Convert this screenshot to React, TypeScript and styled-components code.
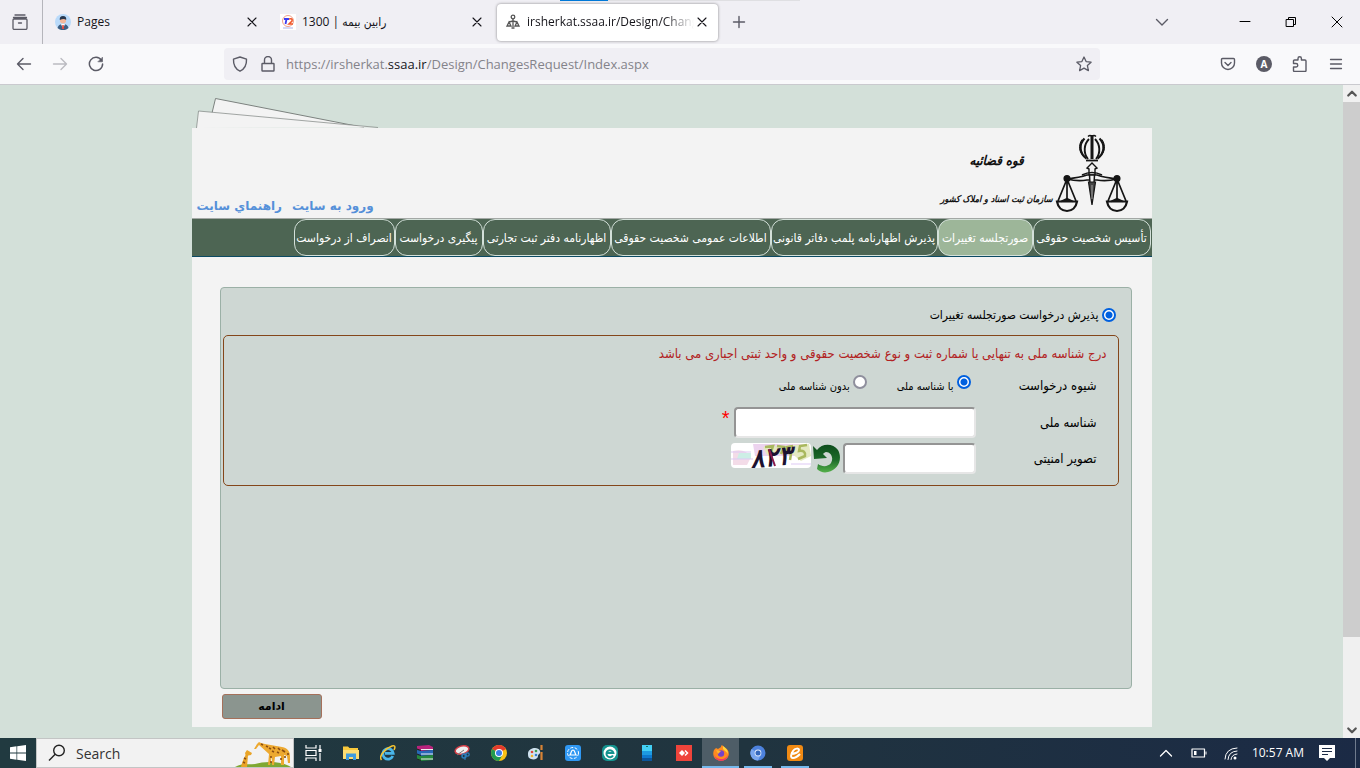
import React from "react";
import styled, { createGlobalStyle, css } from "styled-components";

const ui = `"Open Sans", "DejaVu Sans Condensed", "DejaVu Sans", sans-serif`;
const fa = `"DejaVu Sans Condensed", "DejaVu Sans", sans-serif`;

const GlobalStyle = createGlobalStyle`
  * { box-sizing: border-box; }
  body { margin: 0; font-family: ${ui}; font-size: 12px; color: #15141a; }
  button, input { font-family: inherit; }
`;

const Screen = styled.div`
  display: flex;
  flex-direction: column;
  min-height: 100vh;
`;

/* ---------- browser chrome ---------- */
const TabBar = styled.header`
  position: relative;
  display: flex;
  align-items: center;
  height: 44px;
  background: #f0eff4;
`;
const LoadingMark = styled.span`
  position: absolute;
  top: 0;
  left: 560px;
  width: 240px;
  height: 1px;
  background: linear-gradient(to right, #0078d7 20%, #dfdfe2 20%);
`;
const IconButton = styled.button<{ $w?: number }>`
  display: grid;
  place-items: center;
  flex: none;
  width: ${(p) => p.$w ?? 36}px;
  height: 32px;
  padding: 0;
  border: 0;
  background: none;
  color: #5b5b66;
`;
const RecentBox = styled.div`
  display: flex;
  align-items: center;
  height: 100%;
  width: 43px;
  padding-left: 2px;
  border-right: 1px solid #b5b5bb;
`;
const Tab = styled.div<{ $active?: boolean }>`
  display: flex;
  align-items: center;
  gap: 6px;
  width: 225px;
  height: 44px;
  padding: 0 8px 0 12px;
  ${(p) =>
    p.$active &&
    css`
      width: 221px;
      height: 37px;
      margin: 0 0 0 4px;
      padding: 0 8px 0 8px;
      border-radius: 4px;
      background: #fff;
      box-shadow: 0 0 3px rgba(0, 0, 0, 0.45);
    `}
`;
const TabTitle = styled.span<{ $fade?: boolean }>`
  flex: 1;
  min-width: 0;
  overflow: hidden;
  white-space: nowrap;
  line-height: 20px;
  ${(p) =>
    p.$fade &&
    css`
      margin-right: -6px;
      mask-image: linear-gradient(to right, #000 82%, transparent);
    `}
`;
const TabClose = styled(IconButton)`
  width: 16px;
  height: 20px;
  color: #15141a;
`;
const Spacer = styled.div`
  flex: 1;
`;
const TabListButton = styled(IconButton)`
  margin-right: 42px;
`;
const ToolBar = styled.div`
  display: flex;
  align-items: center;
  height: 41px;
  padding: 0 6px;
  background: #f9f9fb;
  border-bottom: 1px solid #cacacf;
`;
const UrlBox = styled.div`
  display: flex;
  align-items: center;
  flex: 1;
  min-width: 0;
  height: 32px;
  margin: 0 110px;
  padding-left: 2px;
  border-radius: 4px;
  background: #f0eff4;
`;
const UrlText = styled.span`
  flex: 1;
  min-width: 0;
  overflow: hidden;
  white-space: nowrap;
  padding-left: 4px;
  font-size: 13px;
  line-height: 20px;
  color: #84838a;
  b { font-weight: 400; color: #15141a; }
`;

/* ---------- page ---------- */
const Viewport = styled.div`
  display: flex;
  flex: 1;
  background: #d3e0d9;
`;
const Scrollable = styled.div`
  flex: 1;
  min-width: 0;
  padding-top: 12px;
`;
const Page = styled.div`
  max-width: 960px;
  margin: 0 auto;
`;
const Sheets = styled.svg`
  display: block;
`;
const Body = styled.div`
  background: #f3f3f3;
  padding-bottom: 8px;
`;
const Masthead = styled.div`
  display: flex;
  justify-content: space-between;
  height: 90px;
`;
const Brand = styled.div`
  display: flex;
  align-items: flex-end;
  gap: 2px;
  padding: 0 21px 3px 0;
`;
const BrandText = styled.div`
  display: flex;
  flex-direction: column;
  align-items: center;
  gap: 18px;
  padding-bottom: 6px;
  font-family: ${fa};
  font-weight: 700;
  font-style: italic;
  color: #111;
  white-space: nowrap;
`;
const BrandTop = styled.span`
  font-size: 13px;
  line-height: 20px;
`;
const BrandSub = styled.span`
  font-size: 9px;
  line-height: 20px;
`;
const TopLinks = styled.nav`
  display: flex;
  align-items: flex-end;
  gap: 10px;
  padding: 0 0 3px 5px;
  font-family: "DejaVu Sans", sans-serif;
  font-size: 12px;
  font-weight: 700;
  line-height: 18px;
  a { color: #5590d9; text-decoration: none; }
`;
const Menu = styled.nav`
  display: flex;
  height: 39px;
  padding-right: 1px;
  border-top: 1px solid #a3a8a5;
  border-bottom: 1px solid #0b4a63;
  background: #4d6553;
`;
const MenuItem = styled.a<{ $w: number; $active?: boolean }>`
  display: grid;
  place-items: center;
  width: ${(p) => p.$w}px;
  height: 37px;
  border: 1px solid #d3e0d9;
  border-radius: 12px;
  background: ${(p) => (p.$active ? "#9db699" : "transparent")};
  color: #fff;
  font-family: ${fa};
  font-size: 12px;
  text-decoration: none;
  white-space: nowrap;
`;
const Panel = styled.form`
  min-height: 402px;
  margin: 30px 20px 5px 28px;
  padding: 15px 12px 0 2px;
  border: 1px solid #9bb0a6;
  border-radius: 4px;
  background: #ced7d3;
  font-family: ${fa};
  font-size: 13px;
  color: #000;
`;
const Choice = styled.label<{ $small?: boolean }>`
  display: inline-flex;
  align-items: ${(p) => (p.$small ? "flex-start" : "center")};
  gap: 3px;
  font-size: ${(p) => (p.$small ? 11 : 12)}px;
  line-height: 24px;
  white-space: nowrap;
`;
const Radio = styled.input`
  appearance: none;
  flex: none;
  width: 14px;
  height: 14px;
  margin: 0;
  border: 2px solid #8f8f9d;
  border-radius: 50%;
  background: #fff;
  &:checked {
    border-color: #0060df;
    background: radial-gradient(circle, #0060df 3px, #fff 4px);
  }
`;
const MainChoice = styled.div`
  padding-right: 3px;
  height: 32px;
`;
const Box = styled.fieldset`
  margin: 0;
  min-width: 0;
  height: 151px;
  padding: 6px 11px 0;
  border: 1px solid #84461a;
  border-radius: 5px;
`;
const Hint = styled.p`
  margin: 0;
  line-height: 24px;
  color: #b22222;
  font-size: 13px;
`;
const Row = styled.div<{ $h: number }>`
  display: flex;
  align-items: center;
  height: ${(p) => p.$h}px;
  padding-right: 10px;
`;
const RowLabel = styled.label`
  flex: none;
  width: 121px;
`;
const Choices = styled.div`
  display: flex;
  gap: 30px;
  padding: 4px 5px 0 0;
`;
const Field = styled.input<{ $w: number }>`
  width: ${(p) => p.$w}px;
  height: 31px;
  padding: 2px 4px;
  border: 2px solid;
  border-color: #949494 #e6e6e6 #e6e6e6 #949494;
  border-radius: 4px;
  background: #fff;
`;
const Star = styled.span`
  margin: 0 4px 8px 0;
  color: #f00;
  font-family: "Liberation Sans", sans-serif;
  font-size: 20px;
  line-height: 24px;
`;
const Refresh = styled.button`
  margin: 0 2px;
  padding: 0;
  border: 0;
  background: none;
  width: 28px;
  height: 30px;
`;
const Captcha = styled.svg`
  margin-bottom: 6px;
  border-radius: 4px;
`;
const Submit = styled.button`
  display: block;
  width: 100px;
  height: 25px;
  margin-left: 30px;
  border: 1px solid #a5705a;
  border-radius: 3px;
  background: #8b958f;
  color: #000;
  font-family: "DejaVu Sans", sans-serif;
  font-size: 11px;
  font-weight: 700;
`;
const ScrollBar = styled.div`
  display: flex;
  flex-direction: column;
  width: 17px;
  background: #f0f0f0;
  color: #555;
`;
const ScrollEnd = styled.button`
  display: grid;
  place-items: center;
  height: 17px;
  padding: 0;
  border: 0;
  background: none;
  color: inherit;
`;
const Track = styled.div`
  flex: 1;
`;
const Thumb = styled.div`
  height: 86.5%;
  background: #cdcdcd;
`;

/* ---------- task bar ---------- */
const TaskBar = styled.footer`
  display: flex;
  height: 30px;
  background: linear-gradient(to right, #213a40, #20343f 55%, #1b2a45);
  color: #fff;
`;
const TaskButton = styled.button<{ $w?: number; $state?: "active" | "open" }>`
  position: relative;
  display: grid;
  place-items: center;
  flex: none;
  width: ${(p) => p.$w ?? 37}px;
  height: 30px;
  padding: 0;
  border: 0;
  color: #fff;
  background: ${(p) => (p.$state === "active" ? "#4e5d67" : "none")};
  ${(p) =>
    p.$state &&
    css`
      &::after {
        content: "";
        position: absolute;
        left: ${p.$state === "active" ? 0 : 5}px;
        right: ${p.$state === "active" ? 0 : 4}px;
        bottom: 0;
        height: 2px;
        background: #76b9ed;
      }
    `}
`;
const SearchBox = styled.label`
  display: flex;
  align-items: center;
  width: 258px;
  height: 30px;
  padding-left: 11px;
  border: 1px solid #c3c5c5;
  background: #f2f2f2;
  overflow: hidden;
`;
const SearchInput = styled.input`
  flex: 1;
  min-width: 0;
  margin-left: 10px;
  padding: 0;
  border: 0;
  outline: 0;
  background: none;
  font-size: 14px;
  &::placeholder { color: #333; opacity: 1; }
`;
const Clock = styled.time`
  padding: 0 4px 0 5px;
  line-height: 30px;
  font-size: 12px;
  white-space: nowrap;
`;
const DesktopEdge = styled.span`
  width: 5px;
  margin-left: 9px;
  border-left: 1px solid #6f7b8d;
`;

type IcoProps = { s?: number; w?: number; children: React.ReactNode };
const Ico = ({ s = 16, w = 1.4, children }: IcoProps) => (
  <svg width={s} height={s} viewBox="0 0 16 16" fill="none" stroke="currentColor" strokeWidth={w} strokeLinecap="round" strokeLinejoin="round">
    {children}
  </svg>
);
const Cross = () => (
  <Ico s={16} w={1.1}><path d="M4 4l8 8M12 4l-8 8" /></Ico>
);

const Emblem = () => (
  <svg width="76" height="82" viewBox="0 0 76 82" fill="none" stroke="#151515" strokeWidth="1.5">
    <path d="M37 2v24" strokeWidth="3" />
    <path d="M33 3.500q2-2 4 0q2-2 4 0" strokeWidth="1.400" />
    <path d="M34 6c-5 5-6 14-1 20M40 6c5 5 6 14 1 20" strokeWidth="1.900" />
    <path d="M29.500 5.500c-6 6-5 15 2 20M44.500 5.500c6 6 5 15-2 20" strokeWidth="2.200" />
    <path d="M27 6.500c-4 6-3 13 2 17M47 6.500c4 6 3 13-2 17" strokeWidth="1" />
    <path d="M31 27.500h12" strokeWidth="1.800" />
    <path d="M34 42v-6l-2-1 5-5 5 5-2 1v6" fill="#f3f3f3" strokeWidth="1.400" />
    <path d="M12 46c8-1 14-2 20-4h10c6 2 12 3 20 4-8 2-14 2-20 1h-10c-6 1-12 1-20-1z" fill="#f3f3f3" strokeWidth="1.700" />
    <path d="M27 42q10-5 20 0" strokeWidth="1.500" />
    <path d="M34.500 42h5l-.5 9h-4z" fill="#f3f3f3" />
    <path d="M33.500 49h7l-3.500 23z" fill="#444" strokeWidth="1.200" />
    <path d="M37 52v14" stroke="#bbb" strokeWidth=".8" />
    <circle cx="12" cy="45.500" r="2.800" fill="#151515" />
    <circle cx="62" cy="45.500" r="2.800" fill="#151515" />
    {[12, 62].map((x) => (
      <g key={x}>
        <path d={`M${x} 46L${x - 9} 68M${x} 46L${x + 9} 68M${x} 46v20`} strokeWidth="1.700" />
        <path d={`M${x - 10} 68.500h20c-1 6-5 9.500-10 9.500s-9-3.500-10-9.500z`} strokeWidth="2.200" />
        <path d={`M${x - 6} 68.500l6-3 6 3`} fill="#151515" />
      </g>
    ))}
  </svg>
);

const Giraffes = () => (
  <svg width="58" height="28" viewBox="0 0 58 28" fill="none">
    <path d="M0 28c6-4 14-2 20-3 10-3 26-3 36 3z" fill="#7fa832" />
    <path d="M6 28c1-5 3-9 5-13l2 1-1 12z" fill="#e9a428" />
    <path d="M10 14l2-3 5 3-1 2-5 1z" fill="#e9a428" />
    <path d="M19 10l3-5 2-2 2 1 4 1 17 3c6 1 8 5 8 9v7h-2l-1-7-3-1v10h-3v-9l-6 1-1 8h-2v-9l-2 9h-2l1-11-10-9-3 4z" fill="#eda930" />
    <path d="M26 5l2 1M31 7l2 1M34 9l2 1M38 8l2 2M43 9l2 2M47 11l3 2M37 12l2 1M42 13l2 1M36 17v2M50 17v2M53 14v2M9 19l2 1M8 23l2 1M36 22v2M46 19v2" stroke="#8a4d12" strokeWidth="1.600" />
  </svg>
);

const appIcons: { name: string; state?: "active" | "open"; art: React.ReactNode }[] = [
  { name: "File Explorer", art: <><path d="M0 1.500h5l1.500 1.500H15v11H0z" fill="#f9c93c" /><path d="M0 5h16v9H0z" fill="#fddc73" /><path d="M3 8.500h10V15h-3v-3H6v3H3z" fill="#3f9be0" /></> },
  { name: "Internet Explorer", art: <><path d="M12.800 11A5.200 5.200 0 1 1 13.200 8.300H5" stroke="#49b6ea" strokeWidth="2.800" /><path d="M1.500 15C-2 11 6 3 12 1c4-1 3 2 2 4" stroke="#f4c431" strokeWidth="1.500" /></> },
  { name: "WinRAR", art: <><path d="M0 1l12-1 4 2v3L4 6 0 4z" fill="#b8237c" /><path d="M0 5l4 1 12-1v5L4 11 0 9z" fill="#2767b8" /><path d="M0 10l4 1 12-1v5L4 16l-4-2z" fill="#25883d" /><path d="M4 4.500h12M4 9h12M4 14h12" stroke="#eee" /><path d="M0 4l4 1.500M0 9l4 1.500M0 14l4 1.500" stroke="#222" /></> },
  { name: "Snipping Tool", art: <><ellipse cx="8" cy="5" rx="7" ry="4" transform="rotate(-15 8 5)" fill="#eee" stroke="#d33d46" strokeWidth="1.500" /><path d="M3 10l7-5" stroke="#777" /><circle cx="10" cy="11" r="2" stroke="#2c7ebc" strokeWidth="1.500" /><circle cx="13.500" cy="9.500" r="1.700" stroke="#2c7ebc" strokeWidth="1.300" /><path d="M11 9v6" stroke="#2c7ebc" /></> },
  { name: "Chrome", art: <><circle cx="8" cy="8" r="8" fill="#fbc116" /><path d="M8 8L1.100 4A8 8 0 0 1 15 4z" fill="#e33b2e" /><path d="M8 8L1.100 4A8 8 0 0 0 8 16l3.500-6z" fill="#229a50" /><circle cx="8" cy="8" r="4" fill="#fff" /><circle cx="8" cy="8" r="3" fill="#3a7de8" /></> },
  { name: "Paint", art: <><path d="M0 8C1 3 10 1 12 6c1 3-2 3-2 5 0 3-4 4-7 3-3-1-3-3-3-6z" fill="#cfe2ef" /><circle cx="4" cy="7" r="1.300" fill="#e04a3a" /><circle cx="8" cy="6" r="1.300" fill="#3f9e4d" /><circle cx="4" cy="11" r="1.300" fill="#f0b52d" /><circle cx="8" cy="10" r="1.300" fill="#377fd0" /><path d="M13.500 0v5M13.500 7v8" stroke="#d88335" strokeWidth="2.200" /></> },
  { name: "SHAREit", art: <><rect width="16" height="16" rx="3" fill="#2f98f3" /><circle cx="8" cy="8" r="5.500" stroke="#fff" strokeDasharray="3 1.500" /><path d="M5 10c1-1 1-5 3-5s2 4 3 5z" stroke="#fff" strokeWidth="1.200" /></> },
  { name: "eScan", art: <><rect width="16" height="16" rx="5" fill="#14938f" /><circle cx="8" cy="8" r="6.500" fill="#fff" /><path d="M11 10.500A3.500 3.500 0 1 1 11.400 8H5.500" stroke="#14938f" strokeWidth="2" /></> },
  { name: "Your Phone", art: <><path d="M3 0h10v7H3z" fill="#43d0f5" /><path d="M3 6h10v4H3z" fill="#1d9be2" /><path d="M3 10h10v3H3z" fill="#0e79cf" /><path d="M3 13h10v3H3z" fill="#0b559b" /><path d="M7 1.500h2" stroke="#176" /></> },
  { name: "AnyDesk", art: <><path d="M0 0h16v16H0z" fill="#ef443b" /><path d="M6 5l3 3-3 3-3-3z" fill="#fff" /><path d="M9 5.500L11.500 8 9 10.500" stroke="#fff" strokeWidth="1.500" /></> },
  { name: "Firefox", state: "active", art: <><path d="M1 5l2-2 2 1 3-2c0-1 0-1 1-2l3 3c3 1 5 5 3 9-3 5-11 5-14 0-1-2-1-5 0-7z" fill="#ff8a1f" /><path d="M1 9c1 5 10 8 14 1-1 8-13 8-14-1z" fill="#f13a65" /><path d="M10 1c3 2 5 4 5 8-2-3-3-3-5-5z" fill="#ffd33a" /><circle cx="8" cy="8.500" r="3.200" fill="#7542c9" /><path d="M3 5l5 1-3 3z" fill="#ffb52e" /></> },
  { name: "Chromium", state: "open", art: <><circle cx="8" cy="8" r="7.500" fill="#4d82dd" /><path d="M8 8L1.500 4A7.500 7.500 0 0 0 8 15.500l3-6z" fill="#78a5ef" /><circle cx="8" cy="8" r="3.400" fill="#dce8fb" /><circle cx="8" cy="8" r="2.500" fill="#3467bd" /></> },
  { name: "eToken", state: "open", art: <><rect width="16" height="16" rx="3" fill="#f08a13" /><path d="M4 9c4 0 8-2 8-4s-4-2-6 1-3 7 0 7 5-2 7-4" stroke="#fff" strokeWidth="2" /></> },
];

const menu = [
  { t: "تأسیس شخصیت حقوقی", w: 118 },
  { t: "صورتجلسه تغییرات", w: 95, active: true },
  { t: "پذیرش اظهارنامه پلمب دفاتر قانونی", w: 167 },
  { t: "اطلاعات عمومی شخصیت حقوقی", w: 160 },
  { t: "اظهارنامه دفتر ثبت تجارتی", w: 128 },
  { t: "پیگیری درخواست", w: 88 },
  { t: "انصراف از درخواست", w: 101 },
];

export default function App() {
  return (
    <Screen>
      <GlobalStyle />
      <TabBar>
        <LoadingMark />
        <RecentBox>
          <IconButton aria-label="Recent browsing">
            <Ico s={16} w={1.3}><path d="M3 1h10M1.500 3.500h13M2 5h12q1 0 1 1v8q0 1.500-1.500 1.500h-11Q1 15.500 1 14V6q0-1 1-1M6.500 9h3" /></Ico>
          </IconButton>
        </RecentBox>
        <Tab>
          <svg width="16" height="16" viewBox="0 0 16 16">
            <circle cx="8" cy="8" r="8" fill="#b9dafa" />
            <path d="M2.500 14q1-4 5.500-4t5.500 4A8 8 0 0 1 2.500 14z" fill="#3d5f83" />
            <path d="M6 10l2 5 2-5z" fill="#fff" /><path d="M7.300 11h1.400l.5 4H7z" fill="#e0483f" />
            <circle cx="8" cy="6.500" r="3" fill="#f3b79b" /><path d="M4.800 6q-.5-4 3.200-4t3.200 4Q9 4 4.800 6z" fill="#26384f" />
          </svg>
          <TabTitle>Pages</TabTitle>
          <TabClose aria-label="Close tab"><Cross /></TabClose>
        </Tab>
        <Tab>
          <svg width="16" height="16" viewBox="0 0 16 16" fill="none">
            <path d="M0 0h16v16H0z" fill="#fff" />
            <circle cx="8" cy="7" r="5.500" stroke="#f0a08c" />
            <path d="M4 5h5M6.500 5L5.500 10" stroke="#3c3cf0" strokeWidth="1.800" /><path d="M9 5q4-1 3 2l-3 3h4" stroke="#f1572a" strokeWidth="1.600" />
            <path d="M3 14h10" stroke="#a9b3ea" />
          </svg>
          <TabTitle><bdi dir="rtl">رابین بیمه | 1300</bdi></TabTitle>
          <TabClose aria-label="Close tab"><Cross /></TabClose>
        </Tab>
        <Tab $active>
          <svg width="16" height="16" viewBox="0 0 16 16" fill="none" stroke="#555" strokeWidth="1.300">
            <circle cx="8" cy="3" r="1.800" /><path d="M8 5v8M4 8l4-1 4 1M4 8l-2 4h4zM12 8l-2 4h4zM6.500 14h3" />
          </svg>
          <TabTitle $fade>irsherkat.ssaa.ir/Design/Changes</TabTitle>
          <TabClose aria-label="Close tab"><Cross /></TabClose>
        </Tab>
        <IconButton $w={42} aria-label="New tab"><Ico><path d="M8 2.500v11M2.500 8h11" /></Ico></IconButton>
        <Spacer />
        <TabListButton aria-label="List all tabs"><Ico><path d="M2.500 5.500L8 11l5.500-5.500" /></Ico></TabListButton>
        <IconButton $w={46} aria-label="Minimize"><Ico w={1}><path d="M3 7.500h10" stroke="#000" /></Ico></IconButton>
        <IconButton $w={46} aria-label="Restore"><Ico w={1}><path d="M3.500 5.500h7v7h-7zM5.500 5.500v-2h7v7h-2" stroke="#000" /></Ico></IconButton>
        <IconButton $w={46} aria-label="Close"><Ico w={1}><path d="M3 3l10 10M13 3L3 13" stroke="#000" /></Ico></IconButton>
      </TabBar>

      <ToolBar>
        <IconButton aria-label="Back"><Ico><path d="M14.500 8H1.500M7 2.500L1.500 8 7 13.500" /></Ico></IconButton>
        <IconButton aria-label="Forward" disabled><Ico><path d="M1.500 8h13M9 2.500L14.500 8 9 13.500" stroke="#bbbbc1" /></Ico></IconButton>
        <IconButton aria-label="Reload"><Ico w={1.500}><path d="M13.500 4.300A6.600 6.600 0 1 0 14.600 8" /><path d="M14.500 1.500v4.300h-4.300z" fill="currentColor" strokeWidth=".6" /></Ico></IconButton>
        <UrlBox>
          <IconButton $w={28} aria-label="Tracking protection"><Ico><path d="M8 1l6.500 2.200c.3 6-2.500 10-6.500 12C4 13.200 1.200 9.200 1.500 3.200z" /></Ico></IconButton>
          <IconButton $w={28} aria-label="Site information"><Ico><path d="M2.500 7.500h11q.5 0 .5.500v6.500q0 .5-.5.500h-11q-.5 0-.5-.5V8q0-.5.500-.5M4.500 7.500V4a3.500 3.500 0 0 1 7 0v3.500" /></Ico></IconButton>
          <UrlText>https://irsherkat.<b>ssaa.ir</b>/Design/ChangesRequest/Index.aspx</UrlText>
          <IconButton $w={32} aria-label="Bookmark"><Ico w={1.300}><path d="M8 1l2.100 4.600 5 .6-3.700 3.400 1 5L8 12.100l-4.400 2.500 1-5L.9 6.200l5-.6z" /></Ico></IconButton>
        </UrlBox>
        <IconButton aria-label="Pocket"><Ico><path d="M2.500 2.500h11q1 0 1 1V7a6.500 6.500 0 0 1-13 0V3.500q0-1 1-1M5 6.500l3 3 3-3" /></Ico></IconButton>
        <IconButton aria-label="Account">
          <svg width="16" height="16" viewBox="0 0 16 16"><circle cx="8" cy="8" r="8" fill="#5b5b66" /><text x="8" y="12" textAnchor="middle" fontSize="10" fontWeight="700" fill="#fff" fontFamily="Noto Sans">A</text></svg>
        </IconButton>
        <IconButton aria-label="Extensions"><Ico><path d="M2.500 15.500q-1 0-1-1V11H4a1.600 1.600 0 0 0 0-3.500H1.500V5q0-1 1-1H6V2.500a1.700 1.700 0 0 1 3.400 0V4H13q1 0 1 1v9.500q0 1-1 1z" /></Ico></IconButton>
        <IconButton aria-label="Menu"><Ico w={1.300}><path d="M2.500 3.500h11M2.500 8h11M2.500 12.500h11" /></Ico></IconButton>
      </ToolBar>

      <Viewport>
        <Scrollable>
          <Page>
            <Sheets width="190" height="31" viewBox="0 0 190 31" fill="#f3f3f3" stroke="#7c827f">
              <path d="M20 16l3.500-14.500L172 30.500" />
              <path d="M4.500 31L6.500 14 186 30.500" strokeWidth=".7" />
            </Sheets>
            <Body>
              <Masthead>
                <TopLinks dir="ltr">
                  <a href="#help">راهنماي سايت</a>
                  <a href="#login">ورود به سايت</a>
                </TopLinks>
                <Brand>
                  <BrandText dir="rtl">
                    <BrandTop>قوه قضائیه</BrandTop>
                    <BrandSub>سازمان ثبت اسناد و املاک کشور</BrandSub>
                  </BrandText>
                  <Emblem />
                </Brand>
              </Masthead>
              <Menu dir="rtl">
                {menu.map((m) => (
                  <MenuItem key={m.t} href="#menu" $w={m.w} $active={m.active}>{m.t}</MenuItem>
                ))}
              </Menu>
              <Panel dir="rtl" id="request">
                <MainChoice>
                  <Choice>
                    <Radio type="radio" name="kind" defaultChecked />
                    پذیرش درخواست صورتجلسه تغییرات
                  </Choice>
                </MainChoice>
                <Box>
                  <Hint>درج شناسه ملی به تنهایی یا شماره ثبت و نوع شخصیت حقوقی و واحد ثبتی اجباری می باشد</Hint>
                  <Row $h={38} role="radiogroup" aria-labelledby="way">
                    <RowLabel as="span" id="way">شیوه درخواست</RowLabel>
                    <Choices>
                      <Choice $small><Radio type="radio" name="way" defaultChecked />با شناسه ملی</Choice>
                      <Choice $small><Radio type="radio" name="way" />بدون شناسه ملی</Choice>
                    </Choices>
                  </Row>
                  <Row $h={36}>
                    <RowLabel htmlFor="nid">شناسه ملی</RowLabel>
                    <Field id="nid" $w={242} />
                    <Star>*</Star>
                  </Row>
                  <Row $h={36}>
                    <RowLabel htmlFor="code">تصویر امنیتی</RowLabel>
                    <Field id="code" $w={133} />
                    <Refresh type="button" aria-label="Refresh">
                      <svg width="28" height="30" viewBox="0 0 28 30" fill="none">
                        <defs><linearGradient id="g" x1="0" y1="0" x2="0" y2="1"><stop offset="0" stopColor="#0d4d1c" /><stop offset=".55" stopColor="#1d6b2a" /><stop offset="1" stopColor="#54b04a" /></linearGradient></defs>
                        <path d="M0 3l4 4C9 0 20 0 25 7c5 9 0 20-10 22-4 1-8 0-11-3l1-5c4 3 10 3 13-1 3-5 0-11-5-11-1 0-2 1-3 2l4 4-13 1z" fill="url(#g)" />
                      </svg>
                    </Refresh>
                    <Captcha width="80" height="25" viewBox="0 0 80 25">
                      <path d="M0 0h80v25H0z" fill="#fff" />
                      <path d="M22 1h50l-6 12H24z" fill="#ecd3ee" /><path d="M2 8q12-3 18 6l-4 8H2z" fill="#f3dce8" /><path d="M8 10h12v6H6z" fill="#cdeee6" />
                      <path d="M32 4l46-3 2 12-10 5-10-8-24 2z" fill="#e4e9c2" />
                      <path d="M0 9h20M0 16h22M60 21h20" stroke="#ddc9f4" />
                      <path d="M34 4l8-1-2 6M46 3l7 1-3 7M62 3l-6 1-1 5 5 2-1 6M76 2l-7 1-1 5q7-1 6 5l-7 3" fill="none" stroke="#a9b85e" strokeWidth="2.500" />
                      <text x="40" y="23" textAnchor="middle" fontFamily="DejaVu Sans" fontStyle="italic" fontWeight="700" fontSize="26" fill="#1b1230" transform="rotate(-6 40 14)">۸۲۳</text>
                      <path d="M38 6l6 17" stroke="#8a1c4c" strokeWidth="2" />
                    </Captcha>
                  </Row>
                </Box>
              </Panel>
              <Submit type="submit" form="request">ادامه</Submit>
            </Body>
          </Page>
        </Scrollable>
        <ScrollBar>
          <ScrollEnd aria-label="Scroll up"><Ico s={12} w={3}><path d="M3 10l5-5 5 5" /></Ico></ScrollEnd>
          <Track><Thumb /></Track>
          <ScrollEnd aria-label="Scroll down"><Ico s={12} w={3}><path d="M3 6l5 5 5-5" /></Ico></ScrollEnd>
        </ScrollBar>
      </Viewport>

      <TaskBar>
        <TaskButton $w={36} aria-label="Start">
          <svg width="16" height="16" viewBox="0 0 16 16" fill="#fff"><path d="M0 2.200l6.500-.9v6.300H0zM7.200 1.200L16 0v7.600H7.200zM0 8.400h6.500v6.300L0 13.800zM7.200 8.400H16V16l-8.800-1.200z" /></svg>
        </TaskButton>
        <SearchBox>
          <svg width="18" height="18" viewBox="0 0 18 18" fill="none" stroke="#222" strokeWidth="1.400"><circle cx="11" cy="6.500" r="5.300" /><path d="M7.200 10.200L1 16.500" /></svg>
          <SearchInput placeholder="Search" aria-label="Search" />
          <Giraffes />
        </SearchBox>
        <TaskButton $w={38} aria-label="Task view">
          <svg width="17" height="16" viewBox="0 0 17 16" fill="none" stroke="#fff" strokeWidth="1.200"><path d="M1 0v3h10V0M1 16v-3h10v3M1 5.500h10v5H1zM15 0v4M15 8v8" /><path d="M13.500 4h3v3h-3z" fill="#fff" stroke="none" /></svg>
        </TaskButton>
        {appIcons.map((a) => (
          <TaskButton key={a.name} aria-label={a.name} $state={a.state}>
            <svg width="16" height="16" viewBox="0 0 16 16" fill="none">{a.art}</svg>
          </TaskButton>
        ))}
        <Spacer />
        <TaskButton $w={34} aria-label="Hidden icons"><Ico w={1.300}><path d="M2.500 11L8 5.500l5.500 5.500" /></Ico></TaskButton>
        <TaskButton $w={32} aria-label="Battery"><Ico w={1.200}><path d="M1 4h12.500v8H1z" /><path d="M3 6h2.500v4H3zM14.500 6.500h1v3h-1z" fill="#fff" stroke="none" /></Ico></TaskButton>
        <TaskButton $w={32} aria-label="Network"><Ico w={1}><path d="M2 14Q2.500 3.500 14 3M5 14.500Q5.500 6.500 14 6M8 14.500Q8.500 9.500 14 9" /><circle cx="12" cy="13" r="1.500" fill="#fff" stroke="none" /></Ico></TaskButton>
        <Clock>10:57 AM</Clock>
        <TaskButton $w={38} aria-label="Notifications">
          <svg width="16" height="16" viewBox="0 0 16 16"><path d="M0 0h16v13h-5l-3 3-3-3H0z" fill="#fff" /><path d="M3 3.500h10M3 6.500h10M3 9.500h6" stroke="#1b2a45" /></svg>
        </TaskButton>
        <DesktopEdge />
      </TaskBar>
    </Screen>
  );
}
